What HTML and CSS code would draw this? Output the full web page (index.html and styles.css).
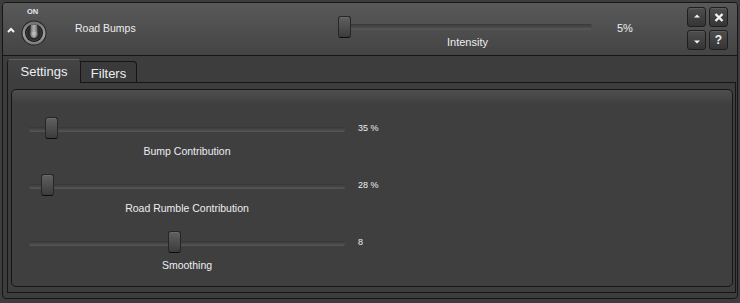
FILE: index.html
```html
<!DOCTYPE html>
<html lang="en">

<head>
    <meta charset="UTF-8">
    <meta name="viewport" content="width=device-width, initial-scale=1.0">
    <title>Road Bumps</title>
    <link rel="stylesheet" href="styles.css">
</head>

<body>
    <div class="widget">
        <div class="header">
            <svg class="caret" width="8" height="6" viewBox="0 0 8 6">
                <polyline points="1,5 4,2 7,5" fill="none" stroke="#f2f2f2" stroke-width="2" />
            </svg>
            <div class="power">
                <span class="power-label">ON</span>
                <svg class="knob" width="26" height="26" viewBox="0 0 26 26">
                    <defs>
                        <linearGradient id="ring" x1="0" y1="0" x2="0" y2="1">
                            <stop offset="0" stop-color="#707070" />
                            <stop offset="0.6" stop-color="#a0a0a0" />
                            <stop offset="1" stop-color="#7a7a7a" />
                        </linearGradient>
                        <linearGradient id="lever" x1="0" y1="0" x2="1" y2="0">
                            <stop offset="0" stop-color="#6a6a6a" />
                            <stop offset="0.5" stop-color="#b4b4b4" />
                            <stop offset="1" stop-color="#606060" />
                        </linearGradient>
                    </defs>
                    <circle cx="13" cy="13" r="12.5" fill="#202020" />
                    <circle cx="13" cy="13" r="11.5" fill="url(#ring)" />
                    <circle cx="13" cy="13" r="9" fill="#151515" />
                    <circle cx="13" cy="13" r="7.5" fill="#2a2a2a" stroke="#404040" />
                    <path d="M10 4.5 h6 l0.8 9.5 a3.8 3.8 0 0 1 -7.6 0 z" fill="url(#lever)" />
                    <ellipse cx="13" cy="13.5" rx="2.5" ry="2" fill="#c4c4c4" opacity="0.6" />
                </svg>
            </div>
            <span class="name">Road Bumps</span>
            <div class="intensity">
                <div class="slider slider-head">
                    <div class="track"></div>
                    <div class="thumb" style="left: 0px"></div>
                </div>
                <span class="caption">Intensity</span>
            </div>
            <span class="value">5%</span>
            <div class="buttons">
                <button class="btn btn-up">
                    <svg width="6" height="4" viewBox="0 0 6 4"><polygon points="0,3.5 3,0.5 6,3.5" fill="#f4f4f4" /></svg>
                </button>
                <button class="btn">
                    <svg width="10" height="9" viewBox="0 0 10 9">
                        <path d="M1.5 1 L8.5 8 M8.5 1 L1.5 8" stroke="#f4f4f4" stroke-width="2.4" />
                    </svg>
                </button>
                <button class="btn btn-down">
                    <svg width="6" height="4" viewBox="0 0 6 4"><polygon points="0,0.5 6,0.5 3,3.5" fill="#f4f4f4" /></svg>
                </button>
                <button class="btn btn-help">?</button>
            </div>
        </div>

        <div class="tabs">
            <div class="tab tab-active">Settings</div>
            <div class="tab">Filters</div>
            <div class="tab-rest"></div>
        </div>

        <div class="pane">
            <div class="panel">
                <div class="setting">
                    <div class="setting-row">
                        <div class="slider">
                            <div class="track"></div>
                            <div class="thumb" style="left: 16px"></div>
                        </div>
                        <span class="setting-value">35 %</span>
                    </div>
                    <span class="caption">Bump Contribution</span>
                </div>
                <div class="setting">
                    <div class="setting-row">
                        <div class="slider">
                            <div class="track"></div>
                            <div class="thumb" style="left: 12px"></div>
                        </div>
                        <span class="setting-value">28 %</span>
                    </div>
                    <span class="caption">Road Rumble Contribution</span>
                </div>
                <div class="setting">
                    <div class="setting-row">
                        <div class="slider">
                            <div class="track"></div>
                            <div class="thumb" style="left: 139px"></div>
                        </div>
                        <span class="setting-value">8</span>
                    </div>
                    <span class="caption">Smoothing</span>
                </div>
            </div>
        </div>
    </div>
</body>

</html>
```

FILE: styles.css
```css
body {
    margin: 0;
    background-color: #3d3d3d;
    font-family: 'Liberation Sans', Arial, sans-serif;
    color: #eceef2;
}

.widget {
    display: flex;
    flex-direction: column;
    box-sizing: border-box;
    width: 736px;
    height: 297px;
    margin: 2px 2px 0 2px;
    border: 1px solid #161616;
    border-radius: 4px;
}

/* header strip */

.header {
    display: flex;
    flex-shrink: 0;
    align-items: flex-start;
    height: 52px;
    border-bottom: 1px solid #161616;
    border-radius: 3px 3px 0 0;
    background: linear-gradient(#595959, #444444);
}

.caret {
    margin: 24px 0 0 4px;
}

.power {
    display: flex;
    flex-direction: column;
    align-items: center;
    width: 26px;
    margin: 5px 0 0 6px;
}

.power-label {
    font-size: 7.5px;
    font-weight: bold;
    line-height: 8px;
    color: #e4e8f0;
    margin-left: -3px;
}

.knob {
    display: block;
    margin-top: 4px;
}

.name {
    width: 263px;
    margin: 19px 0 0 28px;
    font-size: 10.5px;
    line-height: 13px;
}

.intensity {
    display: flex;
    flex-direction: column;
    width: 254px;
    margin-top: 13px;
}

.value {
    width: 70px;
    margin: 19px 0 0 25px;
    font-size: 11px;
    line-height: 13px;
}

.buttons {
    display: grid;
    grid-template-columns: 19px 19px;
    grid-auto-rows: 20px;
    gap: 3px 3px;
    margin-top: 4px;
}

.btn {
    display: flex;
    align-items: center;
    justify-content: center;
    box-sizing: border-box;
    padding: 0;
    border: 1px solid #1e1e1e;
    border-radius: 3px;
    background: linear-gradient(#4e4e4e, #353535);
    box-shadow: inset 0 1px 0 #5c5c5c;
}

.btn-up {
    padding-bottom: 3px;
}

.btn-down {
    padding-top: 3px;
}

.btn-help {
    font-family: 'Liberation Sans', Arial, sans-serif;
    font-size: 12px;
    font-weight: bold;
    color: #f4f4f4;
}

/* sliders */

.slider {
    position: relative;
    width: 316px;
    height: 22px;
}

.slider-head {
    width: 254px;
}

.track {
    height: 5px;
    margin-top: 10px;
    border-radius: 2px;
    background: linear-gradient(#353535, #575757);
}

.slider-head .track {
    height: 6px;
    margin-top: 8px;
    background: linear-gradient(#383838, #5a5a5a);
}

.thumb {
    position: absolute;
    top: 0;
    box-sizing: border-box;
    width: 13px;
    height: 22px;
    border: 1px solid #262626;
    border-bottom-color: #0c0c0c;
    border-radius: 3px;
    background: linear-gradient(#606060, #3c3c3c);
    box-shadow: inset 0 1px 0 #6c6c6c;
}

.caption {
    display: block;
    text-align: center;
    font-size: 10.5px;
    line-height: 13px;
    margin-top: 6px;
}

.intensity .caption {
    font-size: 11px;
    margin-top: -2px;
    padding-left: 5px;
}

/* tabs */

.tabs {
    display: flex;
    flex-shrink: 0;
    align-items: flex-end;
    margin: 3px 1px 0 4px;
}

.tab {
    box-sizing: border-box;
    height: 22px;
    padding-top: 4px;
    border: 1px solid #161616;
    border-left: none;
    border-radius: 0 4px 0 0;
    font-size: 13px;
    line-height: 15px;
    text-align: center;
    width: 56px;
    background-color: #3a3a3a;
}

.tab-active {
    height: 24px;
    width: 74px;
    padding-top: 4px;
    border-left: 1px solid #161616;
    border-top-color: #5e5e5e;
    border-bottom: none;
    border-radius: 4px 4px 0 0;
    background: linear-gradient(#454545, #3d3d3d);
}

.tab-rest {
    flex: 1;
    height: 0;
    border-bottom: 1px solid #161616;
}

.pane {
    display: flex;
    flex-direction: column;
    flex: 1;
    min-height: 0;
    margin: 0 1px 5px 4px;
    border: 1px solid #161616;
    border-top: none;
}

.panel {
    flex: 1;
    margin: 6px 2px 5px 3px;
    padding: 27px 0 0 17px;
    border: 1px solid #161616;
    border-radius: 5px;
    background: linear-gradient(#4e4e4e, #3f3f3f 14px);
}

.setting {
    height: 57px;
}

.setting:last-child {
    height: auto;
}

.setting-row {
    display: flex;
    align-items: center;
}

.setting-value {
    margin-left: 13px;
    font-size: 9px;
    line-height: 11px;
}

.setting .caption {
    width: 316px;
}
```
